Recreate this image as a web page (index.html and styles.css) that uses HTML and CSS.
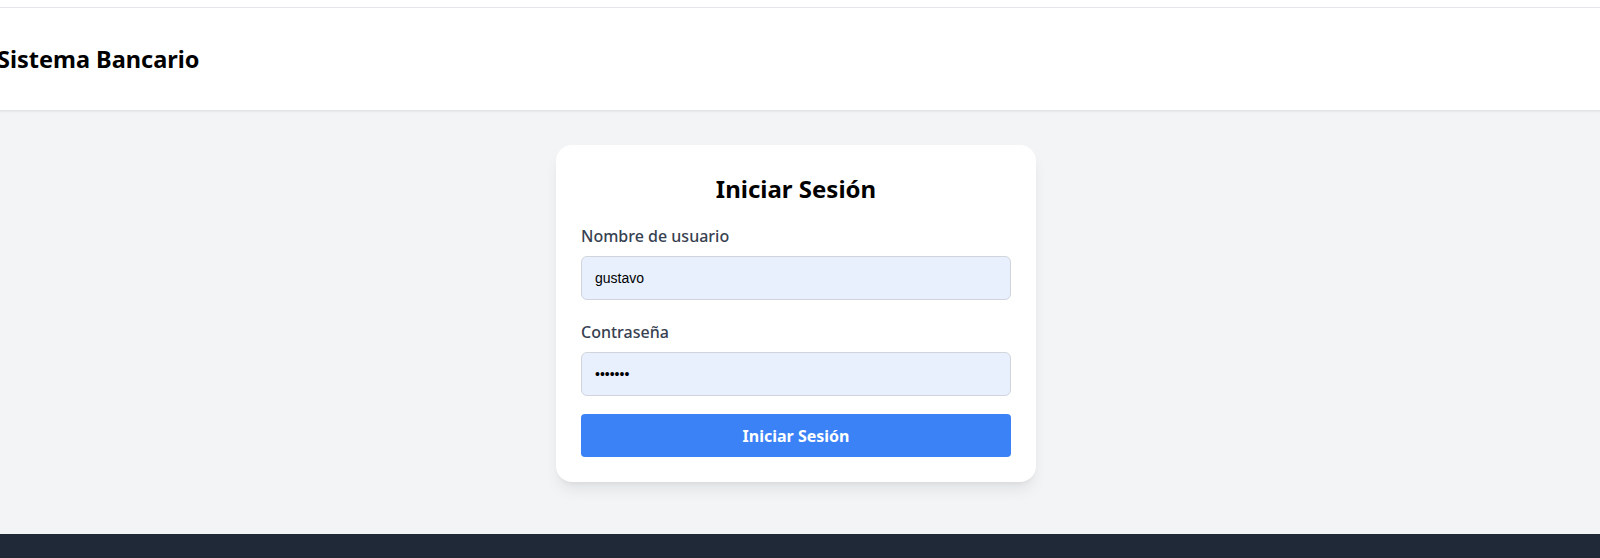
FILE: index.html
```html
<!DOCTYPE html>
<html lang="es">
<head>
<meta charset="utf-8">
<title>Sistema Bancario</title>
<link rel="stylesheet" href="styles.css">
</head>
<body>
<div class="page">
  <div class="topbar"></div>
  <header class="site-header">
    <h1 class="brand">Sistema Bancario</h1>
  </header>
  <main class="main">
    <section class="card">
      <h2 class="card-title">Iniciar Sesión</h2>
      <form class="form">
        <div class="field">
          <label class="label" for="user">Nombre de usuario</label>
          <input class="input" id="user" type="text" value="gustavo">
        </div>
        <div class="field">
          <label class="label" for="pass">Contraseña</label>
          <input class="input" id="pass" type="password" value="1234567">
        </div>
        <button class="btn" type="button">Iniciar Sesión</button>
      </form>
    </section>
  </main>
  <footer class="site-footer"></footer>
</div>
</body>
</html>
```
FILE: styles.css
```css
html, body {
  margin: 0;
  padding: 0;
  overflow: hidden;
}
body {
  background: #f3f4f6;
  font-family: "Noto Sans", "Open Sans", sans-serif;
  color: #000;
}
.page {
  margin-left: -3px;
  width: 1603px;
}
.topbar {
  height: 7px;
  background: #ffffff;
  border-bottom: 1px solid #e5e7eb;
}
.site-header {
  height: 102px;
  background: #ffffff;
  border-bottom: 1px solid #e2e4e8;
  box-shadow: 0 1px 2px rgba(0, 0, 0, 0.06);
  display: flex;
  align-items: center;
}
.brand {
  margin: 0;
  font-size: 23.5px;
  font-weight: 700;
  line-height: 32px;
}
.main {
  display: flex;
  justify-content: center;
  padding: 34px 5px 52px 0;
}
.card {
  width: 480px;
  box-sizing: border-box;
  background: #ffffff;
  border-radius: 16px;
  padding: 28px 25px 25px;
  box-shadow: 0 10px 15px -3px rgba(0, 0, 0, 0.08), 0 4px 6px -4px rgba(0, 0, 0, 0.08);
}
.card-title {
  margin: 0 0 19px;
  text-align: center;
  font-size: 24px;
  font-weight: 700;
  line-height: 32px;
}
.field {
  margin-bottom: 20px;
}
.field + .field {
  margin-bottom: 18px;
}
.label {
  display: block;
  font-size: 16px;
  line-height: 24px;
  font-weight: 500;
  color: #374151;
  margin-bottom: 8px;
}
.input {
  display: block;
  width: 100%;
  height: 44px;
  box-sizing: border-box;
  padding: 0 13px;
  background: #e8f0fe;
  border: 1px solid #d1d5db;
  border-radius: 6px;
  font-family: "Liberation Sans", Arial, sans-serif;
  font-size: 14px;
  color: #000;
  outline: none;
}
.btn {
  display: block;
  width: 100%;
  height: 43px;
  border: none;
  border-radius: 4px;
  background: #3b82f6;
  color: #ffffff;
  font-family: "Noto Sans", "Open Sans", sans-serif;
  font-size: 16px;
  font-weight: 700;
  cursor: pointer;
}
.site-footer {
  height: 80px;
  background: #1f2937;
}
```
